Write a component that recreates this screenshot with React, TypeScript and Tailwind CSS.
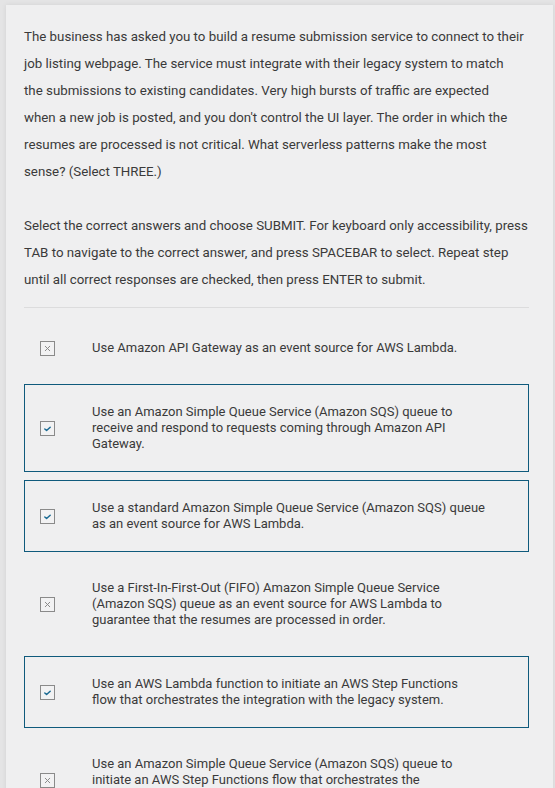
import type { ReactNode } from 'react';

// 换行位置照参考图逐行写死：字体替换后自然折行会漂
const options: { lines: string[]; selected: boolean }[] = [
  { lines: ['Use Amazon API Gateway as an event source for AWS Lambda.'], selected: false },
  {
    lines: [
      'Use an Amazon Simple Queue Service (Amazon SQS) queue to',
      'receive and respond to requests coming through Amazon API',
      'Gateway.',
    ],
    selected: true,
  },
  {
    lines: [
      'Use a standard Amazon Simple Queue Service (Amazon SQS) queue',
      'as an event source for AWS Lambda.',
    ],
    selected: true,
  },
  {
    lines: [
      'Use a First-In-First-Out (FIFO) Amazon Simple Queue Service',
      '(Amazon SQS) queue as an event source for AWS Lambda to',
      'guarantee that the resumes are processed in order.',
    ],
    selected: false,
  },
  {
    lines: [
      'Use an AWS Lambda function to initiate an AWS Step Functions',
      'flow that orchestrates the integration with the legacy system.',
    ],
    selected: true,
  },
  {
    lines: [
      'Use an Amazon Simple Queue Service (Amazon SQS) queue to',
      'initiate an AWS Step Functions flow that orchestrates the',
      'integration with the legacy system.',
    ],
    selected: false,
  },
];

const intro = [
  'The business has asked you to build a resume submission service to connect to their',
  'job listing webpage. The service must integrate with their legacy system to match',
  'the submissions to existing candidates. Very high bursts of traffic are expected',
  "when a new job is posted, and you don't control the UI layer. The order in which the",
  'resumes are processed is not critical. What serverless patterns make the most',
  'sense? (Select THREE.)',
];

const instructions = [
  'Select the correct answers and choose SUBMIT. For keyboard only accessibility, press',
  'TAB to navigate to the correct answer, and press SPACEBAR to select. Repeat step',
  'until all correct responses are checked, then press ENTER to submit.',
];

export default function App() {
  return (
    <div
      className="min-h-screen bg-[#e4e4e5] pt-[5px] pl-[6px] pr-[2px] text-[#3a3a3a]"
      style={{ fontFamily: 'Roboto, "Liberation Sans", sans-serif' }}
    >
      <div className="min-h-[800px] bg-[#efeff0] pt-[18px] pl-[18px] pr-[24px] shadow-[0_0_5px_rgba(0,0,0,0.08)]">
        <Lines className="text-[13.3px] leading-[27px] whitespace-nowrap" lines={intro} />
        <Lines className="mt-[27px] text-[13.3px] leading-[27px] whitespace-nowrap" lines={instructions} />
        <div className="mt-[14px] mb-[12px] h-px bg-[#dcdcdd]" />
        <div className="flex flex-col gap-2">
          {options.map((o) => (
            <Option key={o.lines[0] + o.lines.length} selected={o.selected}>
              <Lines className="" lines={o.lines} />
            </Option>
          ))}
        </div>
      </div>
    </div>
  );
}

function Lines({ lines, className }: { lines: string[]; className: string }) {
  return (
    <p className={className}>
      {lines.map((l, i) => (
        <span key={i} className="block">
          {l}
        </span>
      ))}
    </p>
  );
}

function Option({ selected, children }: { selected: boolean; children: ReactNode }) {
  return (
    <div
      className={`flex items-center border py-[19px] pl-[15px] ${
        selected ? 'border-[#0f5a7c]' : 'border-transparent'
      }`}
    >
      <span className="flex size-[15px] shrink-0 items-center justify-center border border-[#8a8a8a] bg-[#f2f2f3]">
        {selected ? (
          <svg width={9} height={9} viewBox="0 0 10 10" fill="none" aria-hidden>
            <path d="M2 5.5l2 1.8L8 3.5" stroke="#1a6a92" strokeWidth={1.6} strokeLinecap="round" strokeLinejoin="round" />
          </svg>
        ) : (
          <svg width={9} height={9} viewBox="0 0 10 10" fill="none" aria-hidden>
            <path d="M2.5 2.5l5 5M7.5 2.5l-5 5" stroke="#8a8a8a" strokeWidth={1.1} strokeLinecap="round" />
          </svg>
        )}
      </span>
      <div className="ml-[37px] text-[13px] leading-[16px] whitespace-nowrap">{children}</div>
    </div>
  );
}
